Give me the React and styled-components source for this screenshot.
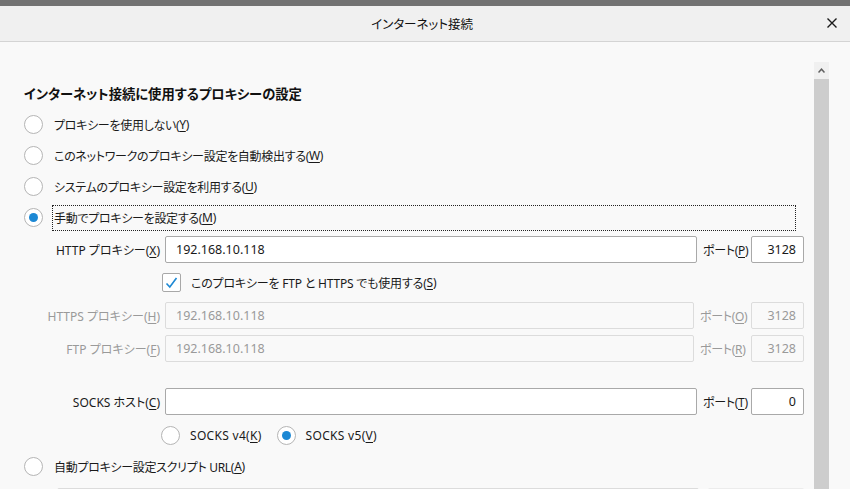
import React from "react";
import styled, { createGlobalStyle } from "styled-components";

const GlobalStyle = createGlobalStyle`
  html, body {
    margin: 0;
    padding: 0;
    height: 489px;
    overflow: hidden;
    background: #f9f9f9;
  }
  body {
    font-family: "Noto Sans", "Noto Sans CJK JP", sans-serif;
    font-size: 12px;
    color: #1a1a1a;
    font-feature-settings: "palt";
  }
  * {
    box-sizing: border-box;
  }
`;

const Window = styled.div`
  width: 850px;
  height: 489px;
  display: flex;
  flex-direction: column;
  overflow: hidden;
`;

const TopStrip = styled.div`
  height: 6px;
  background: #727272;
  flex-shrink: 0;
`;

const TitleBar = styled.div`
  height: 36px;
  flex-shrink: 0;
  background: #f0f0f0;
  border-bottom: 1px solid #d4d4d4;
  display: flex;
  align-items: center;
  justify-content: center;
  position: relative;
`;

const Title = styled.span`
  font-size: 12.5px;
  color: #111;
  margin-top: -1px;
  margin-right: 6px;
`;

const CloseButton = styled.div`
  position: absolute;
  right: 13px;
  top: 12px;
  width: 10px;
  height: 10px;
  display: flex;
  svg {
    display: block;
  }
`;

const Body = styled.div`
  flex: 1;
  display: flex;
  min-height: 0;
`;

const Content = styled.div`
  width: 814px;
  padding: 42px 0 0 24px;
  display: flex;
  flex-direction: column;
  & > * {
    flex-shrink: 0;
  }
`;

const Scrollbar = styled.div`
  width: 15px;
  margin-top: 20px;
  display: flex;
  flex-direction: column;
`;

const ScrollArrow = styled.div`
  height: 17px;
  background: #f0f0f0;
  display: flex;
  align-items: center;
  justify-content: center;
`;

const ScrollThumb = styled.div`
  flex: 1;
  background: #cdcdcd;
`;

const Heading = styled.div`
  font-weight: bold;
  font-size: 13.3px;
  line-height: 20px;
  margin-bottom: 5px;
  color: #111;
`;

const RadioRow = styled.div`
  display: flex;
  align-items: center;
  height: ${(p) => p.$height || 31}px;
  margin-top: ${(p) => p.$gap || 0}px;
  padding-left: ${(p) => p.$indent || 0}px;
`;

const RadioCircle = styled.span`
  width: 19px;
  height: 19px;
  border-radius: 50%;
  border: 1px solid #b5b5b5;
  background: #ffffff;
  flex-shrink: 0;
  display: flex;
  align-items: center;
  justify-content: center;
  &::after {
    content: "";
    width: 9px;
    height: 9px;
    border-radius: 50%;
    background: ${(p) => (p.$checked ? "#1c88d4" : "transparent")};
  }
`;

const RadioLabel = styled.span`
  margin-left: 9px;
  padding: 0 1px;
  height: 26px;
  display: flex;
  align-items: center;
  border: 1px dotted ${(p) => (p.$focused ? "#222" : "transparent")};
  flex: ${(p) => (p.$focused ? 1 : "0 0 auto")};
  margin-right: ${(p) => (p.$focused ? 18 : 0)}px;
  white-space: nowrap;
  letter-spacing: -0.3px;
`;

const Key = styled.span`
  text-decoration: underline;
  text-underline-offset: 2px;
`;

const ProxyRow = styled.div`
  display: flex;
  align-items: center;
  height: 27px;
  margin-top: ${(p) => p.$gap}px;
  color: ${(p) => (p.$disabled ? "#9a9a9a" : "#1a1a1a")};
`;

const FieldLabel = styled.span`
  width: 141px;
  padding-right: 5px;
  text-align: right;
  white-space: nowrap;
`;

const TextField = styled.div`
  width: ${(p) => (p.$disabled ? 529 : 532)}px;
  height: 27px;
  border: 1px solid ${(p) => (p.$disabled ? "#dcdcdc" : "#a9a9a9")};
  border-radius: 2px;
  background: ${(p) => (p.$disabled ? "#f9f9f9" : "#ffffff")};
  padding-left: 10px;
  display: flex;
  align-items: center;
  font-size: 12.5px;
`;

const PortLabel = styled.span`
  width: ${(p) => (p.$disabled ? 57 : 54)}px;
  padding-left: 6px;
  white-space: nowrap;
  letter-spacing: -0.3px;
`;

const PortField = styled(TextField)`
  width: 53px;
  padding: 0 7px 0 0;
  justify-content: flex-end;
`;

const CheckRow = styled.div`
  display: flex;
  align-items: center;
  height: 19px;
  margin-top: 10px;
  padding-left: 138px;
  letter-spacing: -0.2px;
`;

const CheckBox = styled.span`
  width: 19px;
  height: 19px;
  border: 1px solid #a8a8a8;
  border-radius: 2px;
  background: #ffffff;
  display: flex;
  align-items: center;
  justify-content: center;
  margin-right: 10px;
`;

const InlineRadio = styled.span`
  display: flex;
  align-items: center;
  margin-right: 15px;
`;

const InlineText = styled.span`
  margin-left: 10px;
  white-space: nowrap;
  letter-spacing: 0.3px;
`;

const BottomRow = styled.div`
  display: flex;
  margin-top: 6px;
  padding-left: 33px;
  gap: 9px;
`;

const UrlField = styled.div`
  width: 642px;
  height: 27px;
  border: 1px solid #dcdcdc;
  border-radius: 2px;
  background: #f9f9f9;
`;

const ReloadButton = styled.div`
  width: 96px;
  height: 27px;
  background: #ececec;
  border-radius: 2px;
`;

const Radio = ({ checked, children, focused, gap }) => (
  <RadioRow $gap={gap}>
    <RadioCircle $checked={checked} />
    <RadioLabel $focused={focused}>{children}</RadioLabel>
  </RadioRow>
);

const ProxyField = ({ label, k, value, port, portKey, disabled, gap }) => (
  <ProxyRow $gap={gap} $disabled={disabled}>
    <FieldLabel>
      {label}(<Key>{k}</Key>)
    </FieldLabel>
    <TextField $disabled={disabled}>{value}</TextField>
    <PortLabel $disabled={disabled}>
      ポート(<Key>{portKey}</Key>)
    </PortLabel>
    <PortField $disabled={disabled}>{port}</PortField>
  </ProxyRow>
);

export default function App() {
  return (
    <Window>
      <GlobalStyle />
      <TopStrip />
      <TitleBar>
        <Title>インターネット接続</Title>
        <CloseButton>
          <svg width="10" height="10" viewBox="0 0 10 10">
            <path d="M0.5 0.5 L9.5 9.5 M9.5 0.5 L0.5 9.5" stroke="#1a1a1a" strokeWidth="1.4" />
          </svg>
        </CloseButton>
      </TitleBar>
      <Body>
        <Content>
          <Heading>インターネット接続に使用するプロキシーの設定</Heading>
          <Radio>
            プロキシーを使用しない(<Key>Y</Key>)
          </Radio>
          <Radio>
            このネットワークのプロキシー設定を自動検出する(<Key>W</Key>)
          </Radio>
          <Radio>
            システムのプロキシー設定を利用する(<Key>U</Key>)
          </Radio>
          <Radio checked focused>
            手動でプロキシーを設定する(<Key>M</Key>)
          </Radio>

          <ProxyField gap={3} label="HTTP プロキシー" k="X" value="192.168.10.118" portKey="P" port="3128" />
          <CheckRow>
            <CheckBox>
              <svg width="13" height="12" viewBox="0 0 13 12">
                <path d="M1.5 6.5 L4.8 10 L11.5 1" fill="none" stroke="#1c88d4" strokeWidth="1.6" />
              </svg>
            </CheckBox>
            このプロキシーを FTP と HTTPS でも使用する(<Key>S</Key>)
          </CheckRow>
          <ProxyField gap={10} disabled label="HTTPS プロキシー" k="H" value="192.168.10.118" portKey="O" port="3128" />
          <ProxyField gap={6} disabled label="FTP プロキシー" k="F" value="192.168.10.118" portKey="R" port="3128" />
          <ProxyField gap={26} label="SOCKS ホスト" k="C" value="" portKey="T" port="0" />

          <RadioRow $height={19} $gap={11} $indent={137}>
            <InlineRadio>
              <RadioCircle />
              <InlineText>
                SOCKS v4(<Key>K</Key>)
              </InlineText>
            </InlineRadio>
            <InlineRadio>
              <RadioCircle $checked />
              <InlineText>
                SOCKS v5(<Key>V</Key>)
              </InlineText>
            </InlineRadio>
          </RadioRow>
          <Radio gap={6}>
            自動プロキシー設定スクリプト URL(<Key>A</Key>)
          </Radio>
          <BottomRow>
            <UrlField />
            <ReloadButton />
          </BottomRow>
        </Content>
        <Scrollbar>
          <ScrollArrow>
            <svg width="7" height="5" viewBox="0 0 7 5">
              <path d="M0.5 4.5 L3.5 1.2 L6.5 4.5" fill="none" stroke="#606060" strokeWidth="1.5" />
            </svg>
          </ScrollArrow>
          <ScrollThumb />
        </Scrollbar>
      </Body>
    </Window>
  );
}
